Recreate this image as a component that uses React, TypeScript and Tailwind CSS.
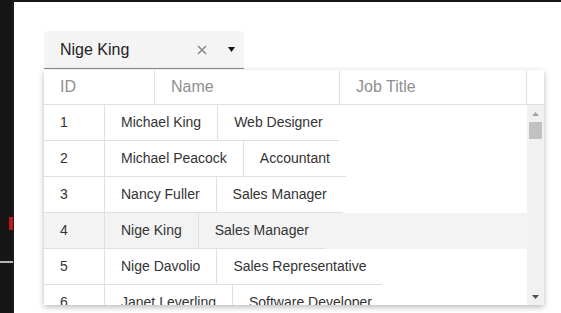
import React from "react";

const rows = [
  { id: "1", name: "Michael King", job: "Web Designer" },
  { id: "2", name: "Michael Peacock", job: "Accountant" },
  { id: "3", name: "Nancy Fuller", job: "Sales Manager" },
  { id: "4", name: "Nige King", job: "Sales Manager", active: true },
  { id: "5", name: "Nige Davolio", job: "Sales Representative" },
  { id: "6", name: "Janet Leverling", job: "Software Developer" },
];

export default function App() {
  return (
    <div
      className="flex w-[561px] h-[313px] overflow-hidden bg-white"
      style={{ fontFamily: '"Liberation Sans", Arial, sans-serif' }}
    >
      <div className="w-[14px] shrink-0 bg-[#161616] border-r border-[#1f1f1f] flex flex-col">
        <div className="h-[217px]" />
        <div className="ml-[9px] w-[4px] h-[13px] bg-[#c0161b]" />
        <div className="h-[31px]" />
        <div className="w-[13px] h-[2px] bg-[#b5b5b5]" />
      </div>
      <div className="flex-1 relative border-t-2 border-[#161616] pl-[30px] pt-[29px]">
        <div className="w-[200px] h-[38px] bg-[#f4f4f4] rounded-t-[4px] border-b border-[#8a8a8a] flex items-center pl-[16px] pr-[9px]">
          <span className="text-[16px] text-[#222] flex-1 leading-none">Nige King</span>
          <svg width="10" height="10" viewBox="0 0 10 10" className="mr-[21px]">
            <path d="M1 1 L9 9 M9 1 L1 9" stroke="#8a8a8a" strokeWidth="1.6" />
          </svg>
          <svg width="7" height="5" viewBox="0 0 7 5">
            <path d="M0 0 L7 0 L3.5 5 Z" fill="#111" />
          </svg>
        </div>
        <div className="absolute left-[30px] top-[68px] w-[500px] h-[235px] bg-white shadow-[0_2px_6px_rgba(0,0,0,0.28)] flex flex-col overflow-hidden">
          <div className="flex h-[35px] border-b border-[#e0e0e0] text-[16px] text-[#8f8f8f] shrink-0">
            <div className="w-[111px] border-r border-[#e0e0e0] pl-[16px] flex items-center">ID</div>
            <div className="w-[185px] border-r border-[#e0e0e0] pl-[16px] flex items-center">Name</div>
            <div className="w-[187px] border-r border-[#e0e0e0] pl-[16px] flex items-center">Job Title</div>
            <div className="flex-1" />
          </div>
          <div className="flex flex-1 min-h-0">
            <div className="flex-1 flex flex-col overflow-hidden text-[14px] text-[#333]">
              {rows.map((r) => (
                <div
                  key={r.id}
                  className={`flex shrink-0 h-[36px] ${r.active ? "bg-[#f3f3f3]" : "bg-white"}`}
                >
                  <div className="w-[61px] border-r border-b border-[#e0e0e0] pl-[16px] flex items-center">
                    {r.id}
                  </div>
                  <div className="border-r border-b border-[#e0e0e0] px-[16px] flex items-center whitespace-nowrap">
                    {r.name}
                  </div>
                  <div className="border-b border-[#e0e0e0] px-[16px] flex items-center whitespace-nowrap">
                    {r.job}
                  </div>
                </div>
              ))}
            </div>
            <div className="w-[17px] shrink-0 bg-[#f1f1f1] flex flex-col items-center">
              <div className="h-[17px] w-full flex items-center justify-center">
                <svg width="7" height="4" viewBox="0 0 7 4">
                  <path d="M0 4 L7 4 L3.5 0 Z" fill="#a3a3a3" />
                </svg>
              </div>
              <div className="w-[13px] h-[17px] bg-[#c1c1c1]" />
              <div className="flex-1" />
              <div className="h-[17px] w-full flex items-center justify-center">
                <svg width="7" height="4" viewBox="0 0 7 4">
                  <path d="M0 0 L7 0 L3.5 4 Z" fill="#505050" />
                </svg>
              </div>
            </div>
          </div>
        </div>
      </div>
    </div>
  );
}
